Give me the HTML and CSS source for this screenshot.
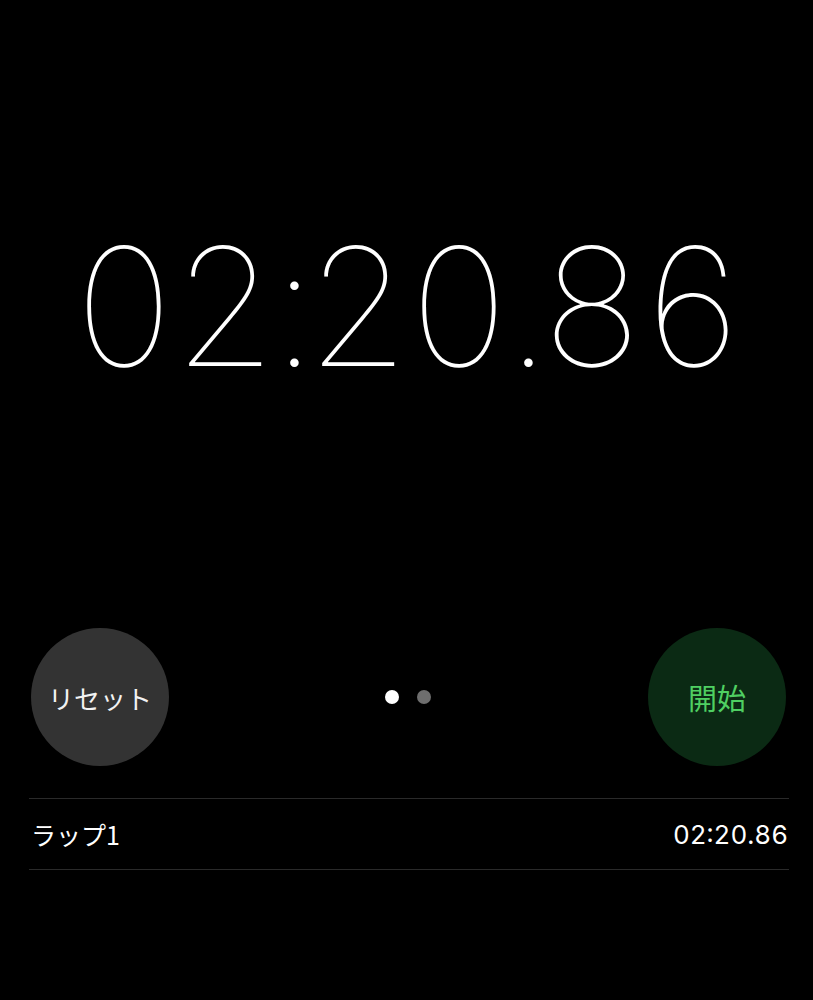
FILE: index.html
```html
<!DOCTYPE html>
<html lang="ja">
<head>
<meta charset="utf-8">
<link rel="stylesheet" href="styles.css">
</head>
<body>
<div class="screen">
  <div class="display">
    <span class="d">0</span><span class="d">2</span><span class="s">:</span><span class="d">2</span><span class="d">0</span><span class="s">.</span><span class="d">8</span><span class="d">6</span>
  </div>
  <div class="controls">
    <div class="btn btn-reset">リセット</div>
    <div class="pager">
      <span class="dot dot-active"></span>
      <span class="dot"></span>
    </div>
    <div class="btn btn-start">開始</div>
  </div>
  <div class="laps">
    <div class="lap">
      <span class="lap-name">ラップ1</span>
      <span class="lap-time">02:20.86</span>
    </div>
  </div>
</div>
</body>
</html>
```
FILE: styles.css
```css
html, body {
  margin: 0;
  padding: 0;
  background: #000;
}
body {
  width: 813px;
  height: 1000px;
  overflow: hidden;
  font-family: Inter, "Noto Sans CJK JP", sans-serif;
  color: #fff;
}
.screen {
  display: flex;
  flex-direction: column;
  padding: 0 24px 0 29px;
}
.display {
  margin-top: 212px;
  padding-right: 6px;
  display: flex;
  justify-content: center;
  font-family: Inter, sans-serif;
  font-weight: 120;
  font-size: 164px;
  line-height: 190px;
  color: #fff;
}
.display .d {
  width: 101px;
  display: flex;
  justify-content: center;
  letter-spacing: -5px;
}
.display .s {
  width: 32px;
  display: flex;
  justify-content: center;
  letter-spacing: -11px;
}
.controls {
  margin-top: 226px;
  display: flex;
  align-items: center;
  justify-content: space-between;
  padding: 0 3px 0 2px;
}
.btn {
  width: 138px;
  height: 138px;
  border-radius: 50%;
  display: flex;
  align-items: center;
  justify-content: center;
  font-family: "Noto Sans CJK JP", sans-serif;
}
.btn-reset {
  background: #333333;
  color: #f2f2f2;
  font-size: 26px;
}
.btn-start {
  background: #0b2a14;
  color: #4fcf62;
  font-size: 29px;
}
.pager {
  display: flex;
  gap: 18px;
  margin-right: 2px;
}
.dot {
  width: 14px;
  height: 14px;
  border-radius: 50%;
  background: #6e6e6e;
}
.dot-active {
  background: #fff;
}
.laps {
  margin-top: 32px;
  border-top: 1px solid #2a2a2a;
}
.lap {
  height: 70px;
  display: flex;
  align-items: center;
  justify-content: space-between;
  border-bottom: 1px solid #2a2a2a;
  padding: 0 1px 0 2px;
}
.lap-name {
  font-family: "Noto Sans CJK JP", sans-serif;
  font-size: 25px;
}
.lap-time {
  font-family: Inter, sans-serif;
  font-variant-numeric: tabular-nums;
  font-size: 26px;
}
```
